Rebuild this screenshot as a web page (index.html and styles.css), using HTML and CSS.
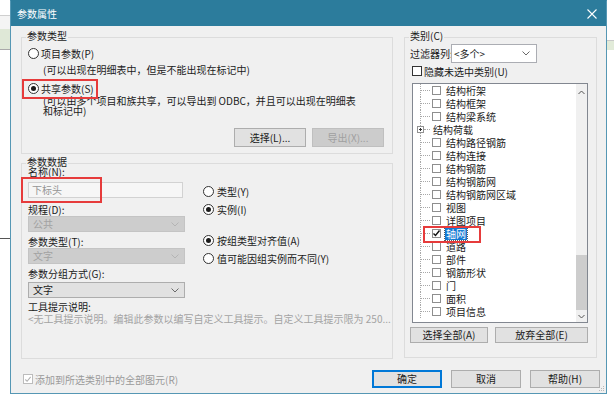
FILE: index.html
```html
<!DOCTYPE html>
<html lang="zh-CN">
<head>
<meta charset="utf-8">
<title>参数属性</title>
<link rel="stylesheet" href="styles.css">
</head>
<body>
<div class="screen">
  <div class="strip strip-left"></div>
  <div class="dialog">
    <div class="titlebar">
      <span class="title">参数属性</span>
      <svg class="close" width="10" height="10" viewBox="0 0 10 10"><path d="M0.5 0.5 L9.5 9.5 M9.5 0.5 L0.5 9.5" stroke="#fff" stroke-width="1.1" fill="none"/></svg>
    </div>
    <div class="content">
      <div class="main">
        <div class="leftcol">
          <section class="group g-type">
            <span class="group-title">参数类型</span>
            <label class="radio r-proj"><span class="rb"></span>项目参数(P)</label>
            <div class="hint">(可以出现在明细表中，但是不能出现在标记中)</div>
            <label class="radio r-shared"><span class="rb on"></span>共享参数(S)</label>
            <div class="hint2">(可以由多个项目和族共享，可以导出到 ODBC，并且可以出现在明细表<br>和标记中)</div>
            <div class="btnrow">
              <button class="btn wide">选择(L)...</button>
              <button class="btn wide" disabled>导出(X)...</button>
            </div>
          </section>
          <section class="group g-data">
            <span class="group-title">参数数据</span>
            <div class="data-grid">
              <div class="fields">
                <div class="flabel l-name">名称(N):</div>
                <div class="input">下标头</div>
                <div class="flabel l-disc">规程(D):</div>
                <div class="select dis"><span>公共</span><svg width="8" height="5" viewBox="0 0 8 5"><path d="M0.5 0.5 L4 4 L7.5 0.5" stroke="#b4b4b4" fill="none"/></svg></div>
                <div class="flabel l-ptype">参数类型(T):</div>
                <div class="select dis"><span>文字</span><svg width="8" height="5" viewBox="0 0 8 5"><path d="M0.5 0.5 L4 4 L7.5 0.5" stroke="#b4b4b4" fill="none"/></svg></div>
                <div class="flabel l-group">参数分组方式(G):</div>
                <div class="select l-sel"><span>文字</span><svg width="8" height="5" viewBox="0 0 8 5"><path d="M0.5 0.5 L4 4 L7.5 0.5" stroke="#6a6a6a" fill="none"/></svg></div>
              </div>
              <div class="choices">
                <label class="radio"><span class="rb"></span>类型(Y)</label>
                <label class="radio"><span class="rb on"></span>实例(I)</label>
                <label class="radio r-gap"><span class="rb on"></span>按组类型对齐值(A)</label>
                <label class="radio"><span class="rb"></span>值可能因组实例而不同(Y)</label>
              </div>
            </div>
            <div class="flabel l-tip">工具提示说明:</div>
            <div class="tip">&lt;无工具提示说明。编辑此参数以编写自定义工具提示。自定义工具提示限为 250...</div>
          </section>
        </div>
        <section class="group g-cat">
          <span class="group-title">类别(C)</span>
          <div class="filter">
            <span class="filter-label">过滤器列:</span>
            <div class="combo"><span>&lt;多个&gt;</span><svg width="8" height="5" viewBox="0 0 8 5"><path d="M0.5 0.5 L4 4 L7.5 0.5" stroke="#6a6a6a" fill="none"/></svg></div>
          </div>
          <label class="check hide"><span class="cb"></span>隐藏未选中类别(U)</label>
          <div class="tree">
            <div class="tree-items">
              <div class="row"><span class="branch"></span><span class="cbt"></span><span class="txt">结构桁架</span></div>
              <div class="row"><span class="branch"></span><span class="cbt"></span><span class="txt">结构框架</span></div>
              <div class="row"><span class="branch"></span><span class="cbt"></span><span class="txt">结构梁系统</span></div>
              <div class="row"><span class="branch"><span class="plus"></span></span><span class="txt node">结构荷载</span></div>
              <div class="row"><span class="branch"></span><span class="cbt"></span><span class="txt">结构路径钢筋</span></div>
              <div class="row"><span class="branch"></span><span class="cbt"></span><span class="txt">结构连接</span></div>
              <div class="row"><span class="branch"></span><span class="cbt"></span><span class="txt">结构钢筋</span></div>
              <div class="row"><span class="branch"></span><span class="cbt"></span><span class="txt">结构钢筋网</span></div>
              <div class="row"><span class="branch"></span><span class="cbt"></span><span class="txt">结构钢筋网区域</span></div>
              <div class="row"><span class="branch"></span><span class="cbt"></span><span class="txt">视图</span></div>
              <div class="row"><span class="branch"></span><span class="cbt"></span><span class="txt">详图项目</span></div>
              <div class="row"><span class="branch"></span><span class="cbt"><svg width="9" height="9" viewBox="0 0 9 9"><path d="M1.5 4.5 L3.5 6.5 L7.5 1.5" stroke="#111" stroke-width="1.4" fill="none"/></svg></span><span class="txt sel">轴网</span></div>
              <div class="row"><span class="branch"></span><span class="cbt"></span><span class="txt">道路</span></div>
              <div class="row"><span class="branch"></span><span class="cbt"></span><span class="txt">部件</span></div>
              <div class="row"><span class="branch"></span><span class="cbt"></span><span class="txt">钢筋形状</span></div>
              <div class="row"><span class="branch"></span><span class="cbt"></span><span class="txt">门</span></div>
              <div class="row"><span class="branch"></span><span class="cbt"></span><span class="txt">面积</span></div>
              <div class="row"><span class="branch"></span><span class="cbt"></span><span class="txt">项目信息</span></div>
            </div>
            <div class="vscroll">
              <div class="sb-up"><svg width="7" height="5" viewBox="0 0 7 5"><path d="M0.5 4 L3.5 1 L6.5 4" stroke="#555" fill="none"/></svg></div>
              <div class="sb-track"><div class="sb-thumb"></div></div>
              <div class="sb-down"><svg width="7" height="5" viewBox="0 0 7 5"><path d="M0.5 1 L3.5 4 L6.5 1" stroke="#555" fill="none"/></svg></div>
            </div>
          </div>
          <div class="catbtns">
            <button class="btn b-all">选择全部(A)</button>
            <button class="btn b-none">放弃全部(E)</button>
          </div>
        </section>
      </div>
      <div class="footer">
        <label class="check dis"><span class="cb"><svg width="9" height="9" viewBox="0 0 9 9"><path d="M1.5 4.5 L3.5 6.5 L7.5 1.5" stroke="#b0b0b0" stroke-width="1.2" fill="none"/></svg></span>添加到所选类别中的全部图元(R)</label>
        <div class="actions">
          <button class="btn act default">确定</button>
          <button class="btn act">取消</button>
          <button class="btn act">帮助(H)</button>
        </div>
      </div>
    </div>
    <div class="mark mark-shared"></div>
    <div class="mark mark-name"></div>
    <div class="mark mark-grid"></div>
    <svg class="grip" width="7" height="7" viewBox="0 0 7 7"><g fill="#b8b8b8"><rect x="5" y="1" width="1" height="1"/><rect x="3" y="3" width="1" height="1"/><rect x="5" y="3" width="1" height="1"/><rect x="1" y="5" width="1" height="1"/><rect x="3" y="5" width="1" height="1"/><rect x="5" y="5" width="1" height="1"/></g></svg>
  </div>
  <div class="strip strip-right"></div>
</div>
</body>
</html>
```

FILE: styles.css
```css
* { box-sizing: border-box; }
html, body { margin: 0; padding: 0; }
body {
  width: 614px;
  height: 403px;
  overflow: hidden;
  background: #fff;
  font-family: "Noto Sans CJK SC", "Noto Sans", sans-serif;
  font-size: 10px;
  color: #1b1b1b;
}
.screen { display: flex; align-items: flex-start; height: 403px; }
.strip { flex: none; height: 403px; }
.strip-left {
  width: 10px;
  background: linear-gradient(to bottom, #fff 0, #fff 15px, #cfcfcf 15px, #cfcfcf 16px, #f4f4f4 16px, #f4f4f4 29px, #dfe8d7 29px, #dfe8d7 49px, #a9a9a9 49px, #a9a9a9 50px, #fff 50px, #fff 238px, #555 238px, #555 239px, #fff 239px);
}
.strip-right {
  width: 7px;
  background: linear-gradient(to bottom, #fff 0, #fff 40px, #c9c9c9 40px, #c9c9c9 41px, #e2ebd9 41px, #e2ebd9 50px, #fff 50px);
}
.dialog {
  flex: none;
  width: 597px;
  height: 394px;
  border: 1px solid #5597b4;
  border-top-color: #2c7c9c;
  background: #f0f0f0;
  position: relative;
  display: flex;
  flex-direction: column;
}
.titlebar {
  height: 25px;
  flex: none;
  background: #2c7c9c;
  color: #fff;
  display: flex;
  align-items: center;
  justify-content: space-between;
  padding: 0 9px 0 6px;
}
.title { font-size: 10px; line-height: 12px; }
.close { display: block; }
.content {
  flex: 1;
  padding: 11px 6px 0 10px;
  display: flex;
  flex-direction: column;
}
.main {
  flex: none;
  display: grid;
  grid-template-columns: 372px 193px;
  column-gap: 11px;
  margin-right: 3px;
  align-items: start;
}
.leftcol { display: flex; flex-direction: column; }
.group {
  flex: none;
  border: 1px solid #dcdcdc;
  display: flex;
  flex-direction: column;
}
.group-title {
  flex: none;
  align-self: flex-start;
  margin: -8px 0 1px 4px;
  padding: 0 1px;
  height: 12px;
  line-height: 12px;
  background: #f0f0f0;
  white-space: nowrap;
}
.radio { flex: none; display: flex; align-items: center; gap: 2px; white-space: nowrap; }
.rb {
  flex: none;
  width: 11px;
  height: 11px;
  border: 1px solid #333;
  border-radius: 50%;
  background: #fff;
  display: flex;
  align-items: center;
  justify-content: center;
}
.rb.on::after {
  content: "";
  width: 5px;
  height: 5px;
  border-radius: 50%;
  background: #1b1b1b;
}
.g-type { height: 117px; }
.g-type .r-proj { margin: 2px 0 0 6px; height: 17px; }
.g-type .hint { flex: none; padding-left: 21px; height: 16px; line-height: 16px; white-space: nowrap; }
.g-type .r-shared { margin: 1px 0 0 6px; height: 19px; }
.g-type .hint2 { flex: none; margin-top: -2px; height: 20px; padding-left: 21px; line-height: 10px; white-space: nowrap; }
.btnrow {
  flex: none;
  display: flex;
  justify-content: flex-end;
  gap: 6px;
  margin-top: 12px;
  padding-right: 8px;
}
.btn {
  font: inherit;
  color: #1b1b1b;
  background: #e1e1e1;
  border: 1px solid #adadad;
  padding: 0;
  margin: 0;
  white-space: nowrap;
}
.btn:disabled { background: #cccccc; border-color: #bfbfbf; color: #a0a0a0; }
.btn.wide { width: 72px; height: 19px; }

.g-data { margin-top: 9px; height: 196px; }
.data-grid { flex: none; display: flex; padding-left: 6px; }
.fields { width: 157px; flex: none; display: flex; flex-direction: column; }
.flabel { flex: none; height: 12px; line-height: 12px; white-space: nowrap; }
.l-name { margin-top: -3px; }
.input {
  flex: none;
  margin-top: 4px;
  width: 155px;
  height: 16px;
  border: 1px solid #d2d2d2;
  background: #f6f6f6;
  color: #959595;
  padding-left: 3px;
  line-height: 14px;
}
.l-disc { margin-top: 6px; }
.l-ptype { margin-top: 4px; }
.l-group { margin-top: 4px; }
.l-sel { margin-top: 2px; }
.select {
  flex: none;
  width: 157px;
  height: 16px;
  display: flex;
  align-items: center;
  justify-content: space-between;
  padding: 0 5px 0 4px;
  background: #e1e1e1;
  border: 1px solid #adadad;
  line-height: 14px;
}
.select svg { display: block; }
.select.dis { background: #cdcdcd; border-color: #c4c4c4; color: #a2a2a2; }
.choices { margin-left: 18px; margin-top: 13px; display: flex; flex-direction: column; }
.choices .radio { height: 18px; gap: 3px; }
.choices .r-gap { margin-top: 13px; }
.l-tip { margin-top: 3px; padding-left: 6px; }
.tip {
  flex: none;
  padding-left: 6px;
  height: 13px;
  line-height: 12px;
  color: #a3a3a3;
  white-space: nowrap;
}

.g-cat { height: 321px; }
.filter {
  flex: none;
  display: flex;
  align-items: center;
  margin-top: 1px;
  height: 19px;
  padding-left: 5px;
}
.filter-label { width: 41px; flex: none; white-space: nowrap; }
.combo {
  width: 86px;
  height: 19px;
  background: #fff;
  border: 1px solid #abadb3;
  display: flex;
  align-items: center;
  justify-content: space-between;
  padding: 0 6px 0 2px;
}
.combo svg { display: block; }
.check { flex: none; display: flex; align-items: center; gap: 2px; white-space: nowrap; }
.cb {
  flex: none;
  width: 10px;
  height: 10px;
  border: 1px solid #333;
  background: #fff;
  display: flex;
  align-items: center;
  justify-content: center;
}
.cb svg { display: block; }
.hide { margin-top: 1px; height: 14px; padding-left: 7px; }
.tree {
  flex: none;
  margin: 5px 0 0 7px;
  width: 176px;
  height: 240px;
  border: 1px solid #828790;
  background: #fff;
  display: flex;
}
.tree-items { flex: 1; overflow: hidden; padding-left: 7px; }
.row { height: 13px; display: flex; align-items: center; white-space: nowrap; }
.branch {
  flex: none;
  width: 10px;
  height: 13px;
  border-left: 1px dotted #a8a8a8;
  display: flex;
  align-items: center;
}
.branch::after {
  content: "";
  flex: 1;
  border-top: 1px dotted #a8a8a8;
}
.plus {
  flex: none;
  width: 7px;
  height: 7px;
  margin-left: -4px;
  border: 1px solid #919191;
  background:
    linear-gradient(#333, #333) 1px 2px / 3px 1px no-repeat,
    linear-gradient(#333, #333) 2px 1px / 1px 3px no-repeat,
    #fff;
}
.cbt {
  flex: none;
  width: 9px;
  height: 9px;
  margin-left: 2px;
  border: 1px solid #8e8e8e;
  background: #fff;
  display: flex;
  align-items: center;
  justify-content: center;
}
.cbt svg { display: block; margin: -1px; }
.txt { margin-left: 5px; line-height: 12px; }
.txt.node { margin-left: 3px; }
.txt.sel {
  background: #1479d2;
  color: #fff;
  padding: 0 1px;
  margin-left: 4px;
  outline: 1px dotted #5a5a5a;
}
.vscroll {
  flex: none;
  width: 11px;
  background: #f0f0f0;
  display: flex;
  flex-direction: column;
}
.sb-up { height: 16px; display: flex; align-items: center; justify-content: center; }
.sb-track { flex: 1; display: flex; flex-direction: column; justify-content: flex-end; }
.sb-thumb { height: 55px; background: #cdcdcd; }
.sb-down { height: 12px; display: flex; align-items: center; justify-content: center; }
.catbtns { flex: none; display: flex; gap: 7px; margin-top: 4px; padding-left: 5px; }
.catbtns .btn { height: 16px; line-height: 14px; }
.b-all { width: 78px; }
.b-none { width: 93px; }

.footer {
  flex: none;
  margin-top: 11px;
  height: 18px;
  display: flex;
  align-items: center;
  justify-content: space-between;
  padding-left: 2px;
}
.check.dis { color: #9a9a9a; gap: 2px; }
.check.dis .cb { width: 10px; height: 10px; border-color: #bcbcbc; }
.actions { display: flex; gap: 9px; }
.btn.act { width: 70px; height: 18px; line-height: 16px; }
.btn.default { border-color: #0078d7; box-shadow: inset 0 0 0 1px #0078d7; }

.mark { position: absolute; border: 2px solid #e63b3b; }
.mark-shared { left: 11px; top: 78px; width: 76px; height: 20px; }
.mark-name { left: 10px; top: 176px; width: 81px; height: 26px; }
.mark-grid { left: 412px; top: 225px; width: 58px; height: 17px; }
.grip { position: absolute; right: 1px; bottom: 1px; }
```
